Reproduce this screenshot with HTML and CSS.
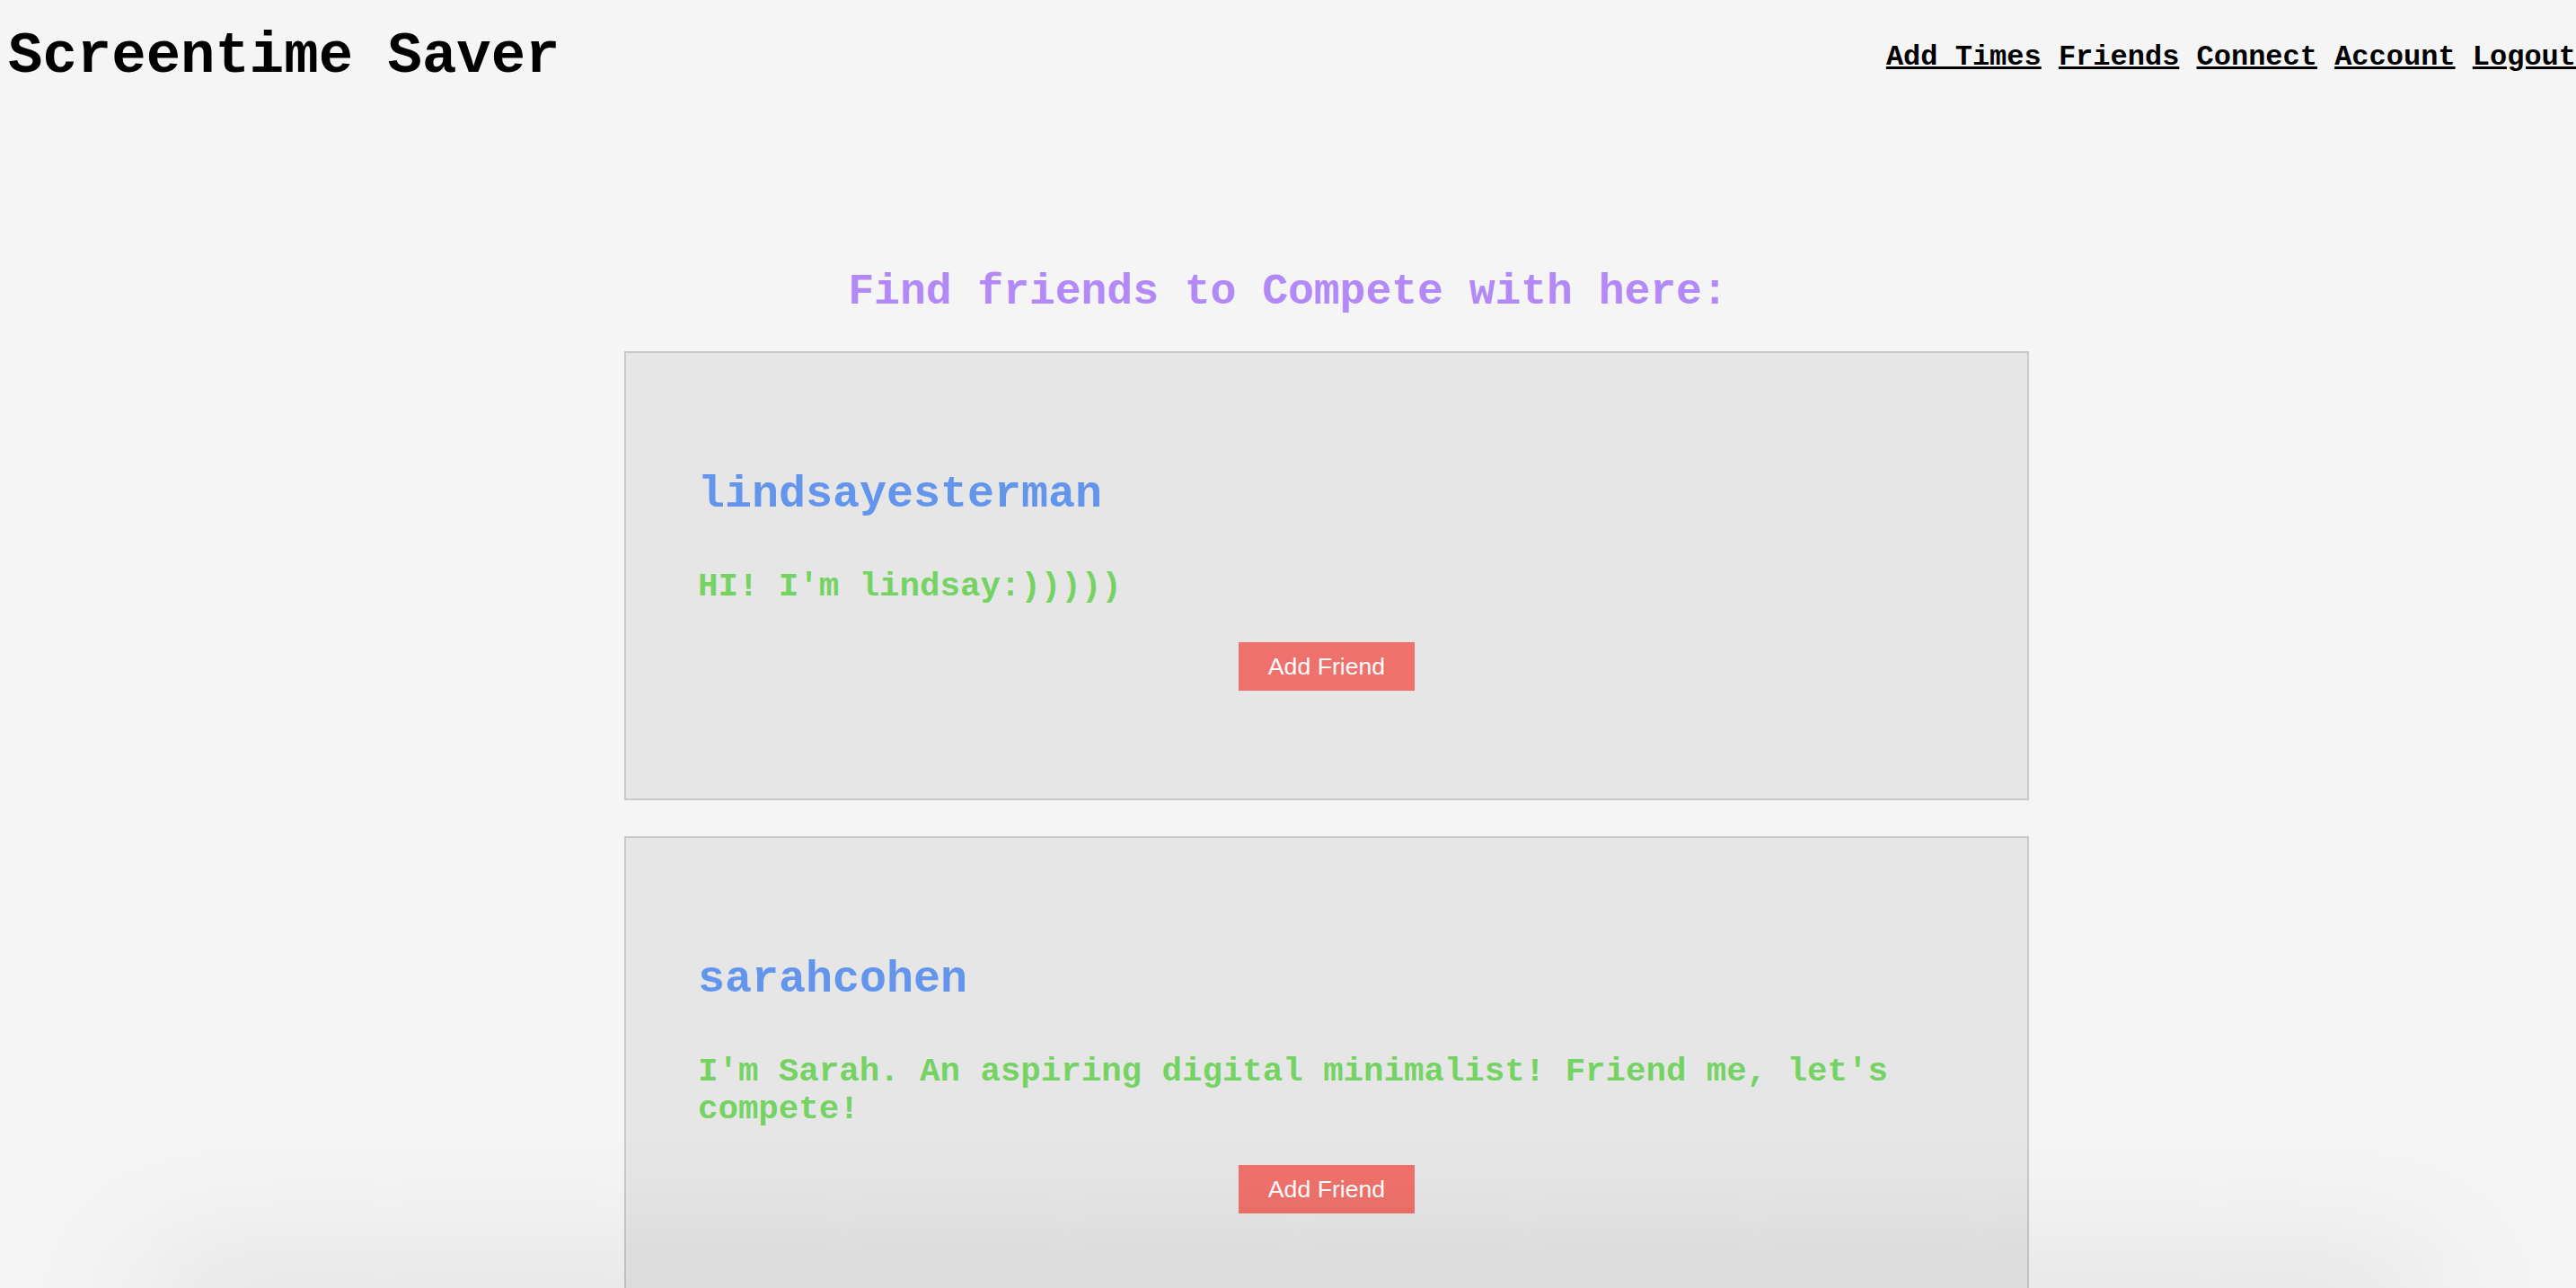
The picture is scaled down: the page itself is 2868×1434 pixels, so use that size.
FILE: index.html
```html
<!DOCTYPE html>
<html lang="en">
<head>
<meta charset="utf-8">
<title>Screentime Saver</title>
<link rel="stylesheet" href="styles.css">
</head>
<body>
<header class="topbar">
  <h1 class="brand">Screentime Saver</h1>
  <nav class="nav">
    <a href="#" class="nav-link">Add Times</a>
    <a href="#" class="nav-link">Friends</a>
    <a href="#" class="nav-link">Connect</a>
    <a href="#" class="nav-link">Account</a>
    <a href="#" class="nav-link">Logout</a>
  </nav>
</header>
<main class="content">
  <h2 class="page-title">Find friends to Compete with here:</h2>
  <section class="friends">
    <article class="card">
      <h2 class="username">lindsayesterman</h2>
      <h3 class="bio">HI! I'm lindsay:)))))</h3>
      <div class="actions"><button class="add-btn">Add Friend</button></div>
    </article>
    <article class="card">
      <h2 class="username">sarahcohen</h2>
      <h3 class="bio">I'm Sarah. An aspiring digital minimalist! Friend me, let's compete!</h3>
      <div class="actions"><button class="add-btn">Add Friend</button></div>
    </article>
  </section>
</main>
<div class="bottom-shade"></div>
</body>
</html>
```
FILE: styles.css
```css
html, body {
  margin: 0;
  padding: 0;
  background: #f5f5f5;
  font-family: "Liberation Mono", "Courier New", monospace;
  color: #000;
}

.topbar {
  display: flex;
  justify-content: space-between;
  align-items: flex-start;
  padding: 27px 0 0 9px;
}

.brand {
  margin: 0;
  font-size: 64px;
  line-height: normal;
  font-weight: bold;
}

.nav {
  margin-top: 18px;
  font-size: 32px;
  font-weight: bold;
  white-space: nowrap;
}

.nav-link {
  color: #000;
  text-decoration: underline;
}

.content {
  padding-top: 199px;
}

.page-title {
  margin: 0 0 39px;
  text-align: center;
  font-size: 48px;
  line-height: normal;
  font-weight: bold;
  color: #b388f7;
}

.friends {
  width: 1564px;
  margin-left: 695px;
  display: flex;
  flex-direction: column;
  gap: 40px;
}

.card {
  box-sizing: border-box;
  background: #e6e6e6;
  border: 2px solid #c9c9c9;
  padding: 129px 80px 120px;
}

.username {
  margin: 0 0 53px;
  font-size: 50px;
  line-height: normal;
  font-weight: bold;
  color: #6495ed;
}

.bio {
  margin: 0 0 41px;
  font-size: 37.44px;
  line-height: normal;
  font-weight: bold;
  color: #74d363;
}

.actions {
  display: flex;
  justify-content: center;
}

.add-btn {
  border: none;
  background: #ef716b;
  color: #fff;
  font-family: "Liberation Sans", Arial, sans-serif;
  font-size: 26.67px;
  line-height: 30px;
  padding: 12px 33px;
  margin: 0;
}

.bottom-shade {
  position: fixed;
  left: 160px;
  right: 160px;
  bottom: -40px;
  height: 40px;
  box-shadow: 0 0 160px rgba(0, 0, 0, 0.24);
  pointer-events: none;
}
```
